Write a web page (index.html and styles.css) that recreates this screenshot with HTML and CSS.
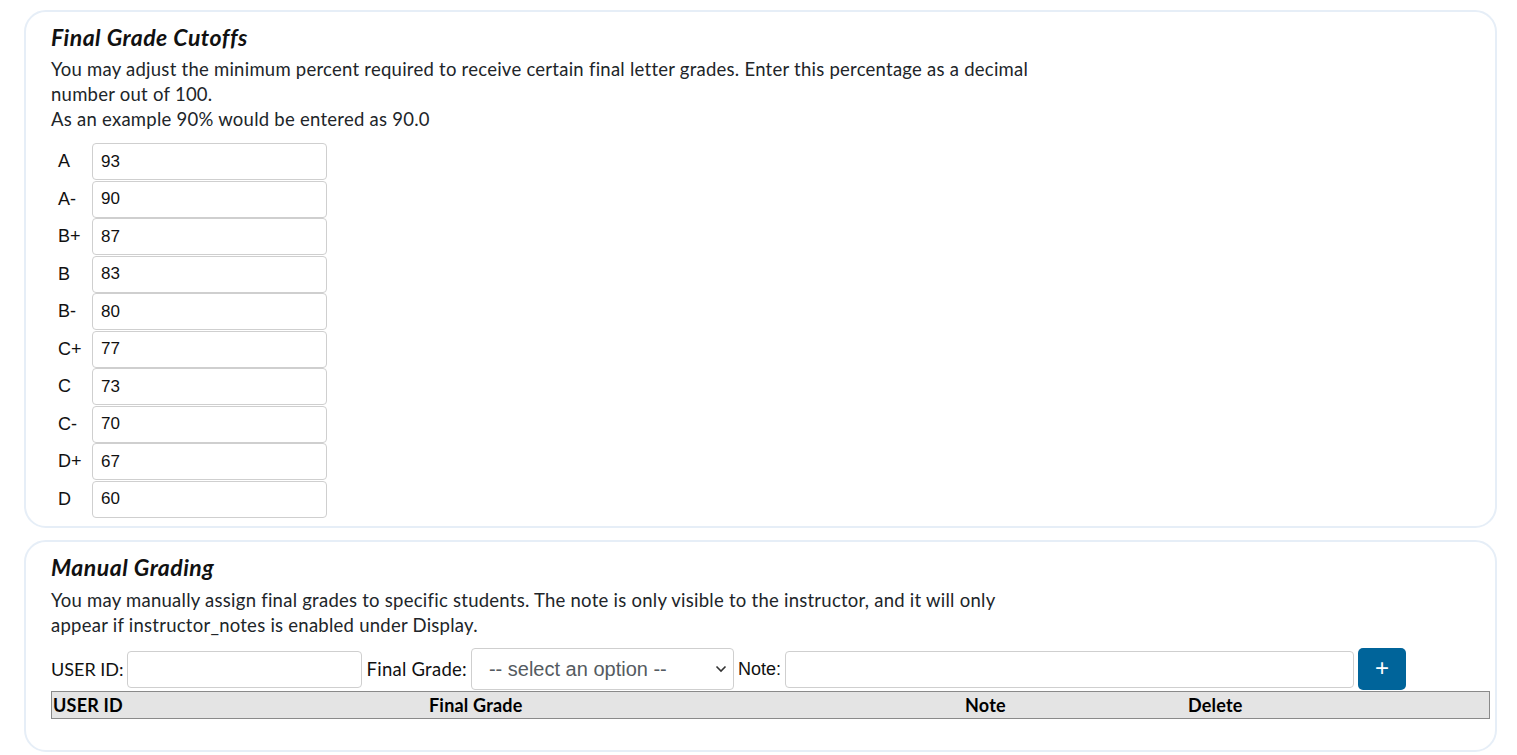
FILE: index.html
```html
<!DOCTYPE html>
<html>
<head>
<meta charset="utf-8">
<link rel="stylesheet" href="styles.css">
</head>
<body>
<section class="card card-cutoffs">
  <h2 class="card-title">Final Grade Cutoffs</h2>
  <p class="desc desc-first">You may adjust the minimum percent required to receive certain final letter grades. Enter this percentage as a decimal number out of 100.</p>
  <p class="desc">As an example 90% would be entered as 90.0</p>
  <div class="grades">
    <label class="g-label">A</label><input class="g-input" type="text" value="93">
    <label class="g-label">A-</label><input class="g-input" type="text" value="90">
    <label class="g-label">B+</label><input class="g-input" type="text" value="87">
    <label class="g-label">B</label><input class="g-input" type="text" value="83">
    <label class="g-label">B-</label><input class="g-input" type="text" value="80">
    <label class="g-label">C+</label><input class="g-input" type="text" value="77">
    <label class="g-label">C</label><input class="g-input" type="text" value="73">
    <label class="g-label">C-</label><input class="g-input" type="text" value="70">
    <label class="g-label">D+</label><input class="g-input" type="text" value="67">
    <label class="g-label">D</label><input class="g-input" type="text" value="60">
  </div>
</section>
<section class="card card-manual">
  <h2 class="card-title">Manual Grading</h2>
  <p class="desc desc-manual">You may manually assign final grades to specific students. The note is only visible to the instructor, and it will only appear if instructor_notes is enabled under Display.</p>
  <div class="form-row">
    <label class="f-label f-user-label">USER ID:</label>
    <input class="f-input f-user" type="text">
    <label class="f-label">Final Grade:</label>
    <div class="select-wrap">
      <span class="select-text">-- select an option --</span>
      <svg class="chev" width="12" height="8" viewBox="0 0 12 8"><path d="M1.5 1.5 L6 6 L10.5 1.5" fill="none" stroke="#333" stroke-width="1.6"/></svg>
    </div>
    <label class="f-label f-note-label">Note:</label>
    <input class="f-input f-note" type="text">
    <button class="add-btn" type="button">+</button>
  </div>
  <table class="grade-table">
    <thead>
      <tr>
        <th class="c1">USER ID</th>
        <th class="c2">Final Grade</th>
        <th class="c3">Note</th>
        <th class="c4">Delete</th>
      </tr>
    </thead>
  </table>
</section>
</body>
</html>
```
FILE: styles.css
```css
html, body {
  margin: 0;
  padding: 0;
  background: #ffffff;
}
body {
  padding: 10px 20px 0 24px;
  font-family: "Lato", "Source Sans Pro", sans-serif;
  color: #212529;
}
.card {
  border: 2px solid #e6eef7;
  border-radius: 22px;
  padding: 10px 25px 8px 25px;
}
.card-manual {
  margin-top: 12px;
  padding-bottom: 31px;
}
.card-title {
  margin: 0 0 2px 0;
  font-size: 23px;
  font-style: italic;
  font-weight: 700;
  letter-spacing: 0.5px;
  line-height: 30px;
  color: #111;
}
.desc {
  margin: 0;
  font-size: 18.5px;
  letter-spacing: 0.25px;
  line-height: 25px;
  max-width: 990px;
}
.desc-first {
  margin-top: 5px;
}
.desc-manual {
  margin-top: 6px;
}
.grades {
  margin-top: 11px;
  display: grid;
  grid-template-columns: 41px 235px;
  grid-auto-rows: 37.5px;
  align-items: start;
}
.g-label {
  font-family: "Liberation Sans", Arial, sans-serif;
  font-size: 18px;
  padding-left: 7px;
  line-height: 37px;
  color: #111;
}
.g-input {
  box-sizing: border-box;
  width: 235px;
  height: 37px;
  border: 1px solid #cfcfcf;
  border-radius: 4px;
  padding: 0 8px;
  font-family: "Liberation Sans", Arial, sans-serif;
  font-size: 17px;
  color: #111;
  margin: 0;
}
.form-row {
  margin-top: 10px;
  display: flex;
  align-items: center;
  height: 42px;
}
.f-label {
  font-size: 18.5px;
  letter-spacing: 0.25px;
  color: #111;
  margin-right: 4px;
}
.f-user-label {
  font-size: 18px;
  letter-spacing: 0;
  margin-right: 3px;
}
.f-note-label {
  font-family: "Liberation Sans", Arial, sans-serif;
  font-size: 18px;
  letter-spacing: 0;
  margin-right: 4px;
}
.f-input {
  box-sizing: border-box;
  height: 37px;
  border: 1px solid #cfcfcf;
  border-radius: 4px;
  margin: 0 5px 0 0;
  padding: 0 8px;
  font-size: 16px;
}
.f-user {
  width: 235px;
}
.f-note {
  width: 569px;
  margin-right: 4px;
}
.select-wrap {
  box-sizing: border-box;
  width: 263px;
  height: 42px;
  border: 1px solid #cfcfcf;
  border-radius: 4px;
  display: flex;
  align-items: center;
  justify-content: space-between;
  padding: 0 6px 0 17px;
  margin-right: 4px;
}
.select-text {
  font-family: "Liberation Sans", Arial, sans-serif;
  font-size: 20px;
  color: #555b61;
}
.add-btn {
  box-sizing: border-box;
  width: 48px;
  height: 42px;
  border: none;
  border-radius: 5px;
  background: #00649a;
  color: #ffffff;
  font-family: "Liberation Sans", Arial, sans-serif;
  font-size: 24px;
  line-height: 1;
  padding: 0 0 3px 0;
}
.grade-table {
  width: 1439px;
  border-collapse: collapse;
  margin-top: 1px;
}
.grade-table th {
  background: #e4e4e4;
  border-top: 1px solid #8a8a8a;
  border-bottom: 1px solid #8a8a8a;
  height: 26px;
  padding: 0 1px;
  font-size: 18px;
  font-weight: 700;
  letter-spacing: 0.2px;
  text-align: left;
  color: #000;
}
.grade-table th.c1 {
  border-left: 1px solid #8a8a8a;
  width: 374px;
}
.grade-table th.c2 {
  width: 534px;
}
.grade-table th.c3 {
  width: 221px;
}
.grade-table th.c4 {
  border-right: 1px solid #8a8a8a;
}
```
